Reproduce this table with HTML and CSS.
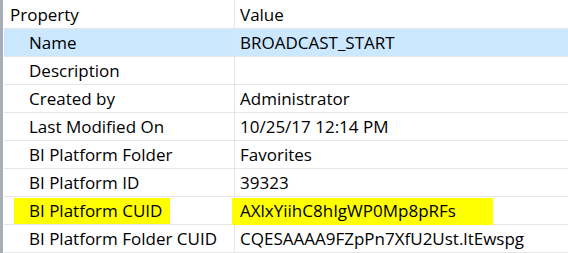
FILE: index.html
```html
<!DOCTYPE html>
<html>
<head>
<meta charset="utf-8">
<link rel="stylesheet" href="styles.css">
</head>
<body>
<div class="panel">
  <div class="edge"></div>
  <div class="grid">
    <div class="row head">
      <div class="cell key">Property</div>
      <div class="cell val">Value</div>
    </div>
    <div class="row sel">
      <div class="cell key">Name</div>
      <div class="cell val">BROADCAST_START</div>
    </div>
    <div class="row">
      <div class="cell key">Description</div>
      <div class="cell val"></div>
    </div>
    <div class="row">
      <div class="cell key">Created by</div>
      <div class="cell val">Administrator</div>
    </div>
    <div class="row">
      <div class="cell key">Last Modified On</div>
      <div class="cell val">10/25/17 12:14 PM</div>
    </div>
    <div class="row">
      <div class="cell key">BI Platform Folder</div>
      <div class="cell val">Favorites</div>
    </div>
    <div class="row">
      <div class="cell key">BI Platform ID</div>
      <div class="cell val">39323</div>
    </div>
    <div class="row">
      <div class="cell key"><span class="mark mark-key"></span><span class="txt">BI Platform CUID</span></div>
      <div class="cell val"><span class="mark mark-val"></span><span class="txt">AXlxYiihC8hIgWP0Mp8pRFs</span></div>
    </div>
    <div class="row">
      <div class="cell key">BI Platform Folder CUID</div>
      <div class="cell val">CQESAAAA9FZpPn7XfU2Ust.ltEwspg</div>
    </div>
  </div>
</div>
</body>
</html>
```

FILE: styles.css
```css
html, body {
  margin: 0;
  padding: 0;
  background: #ffffff;
}
body {
  font-family: "Open Sans", "Noto Sans", sans-serif;
  font-size: 17px;
  color: #000000;
  width: 568px;
  height: 253px;
  overflow: hidden;
}
.panel {
  display: flex;
  height: 253px;
}
.edge {
  width: 3px;
  background: #a8aeb6;
  margin-right: 1px;
  flex: none;
}
.grid {
  flex: 1;
  display: flex;
  flex-direction: column;
}
.row {
  display: grid;
  grid-template-columns: 231px 1fr;
  height: 27px;
  border-bottom: 1px solid #e6e6e6;
}
.row.head {
  height: 28px;
}
.row.sel {
  background: #cce8ff;
}
.cell {
  position: relative;
  display: flex;
  align-items: center;
  white-space: nowrap;
}
.key {
  padding-left: 25px;
  border-right: 1px solid #e6e6e6;
}
.head .key {
  padding-left: 6px;
}
.val {
  padding-left: 5px;
}
.txt {
  position: relative;
}
.mark {
  position: absolute;
  background: #ffff00;
}
.mark-key {
  left: 10px;
  top: 1px;
  width: 156px;
  height: 26px;
}
.mark-val {
  left: -3px;
  top: 1px;
  width: 261px;
  height: 27px;
}
```
